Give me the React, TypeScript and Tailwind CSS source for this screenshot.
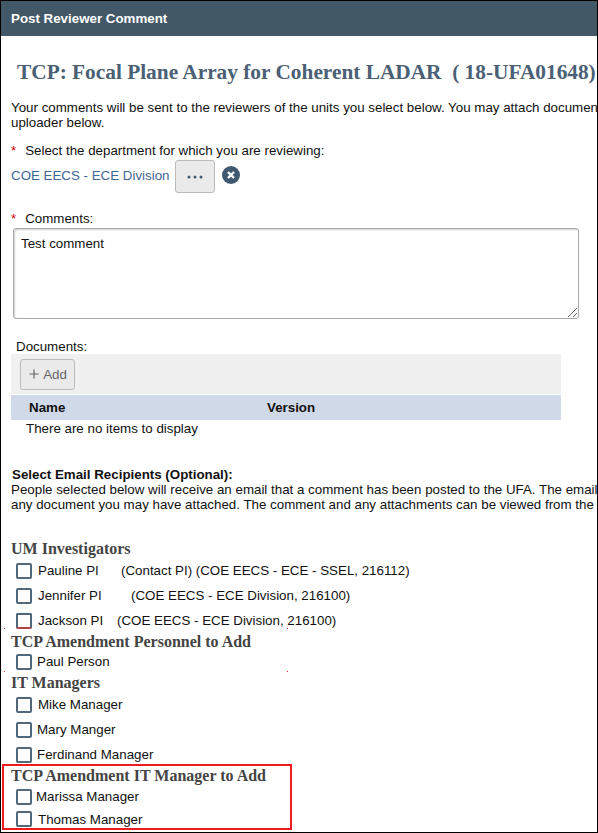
import { Plus } from "lucide-react";

type Person = {
  name: string;
  detail?: string;
  labelClass: string;
  rowClass: string;
  boxClass?: string;
};

const investigators: Person[] = [
  { name: "Pauline PI", detail: "(Contact PI) (COE EECS - ECE - SSEL, 216112)", labelClass: "ml-[6px] w-[83px]", rowClass: "h-[25px]" },
  { name: "Jennifer PI", detail: "(COE EECS - ECE Division, 216100)", labelClass: "ml-[6px] w-[93px]", rowClass: "h-[25px]" },
  { name: "Jackson PI", detail: "(COE EECS - ECE Division, 216100)", labelClass: "ml-[6px] w-[79px]", rowClass: "h-[25px]", boxClass: "border-b-[#b5424a]" }
];

function PersonRow({ name, detail, labelClass, rowClass, boxClass = "" }: Person) {
  return (
    <div className={`flex items-center pl-[15px] ${rowClass}`}>
      <span className={`size-[16px] shrink-0 rounded-[2px] border-2 border-[#51687c] bg-white ${boxClass}`} />
      <span className={`whitespace-nowrap ${labelClass}`}>{name}</span>
      {detail ? <span className="whitespace-nowrap">{detail}</span> : null}
    </div>
  );
}

function GroupTitle({ children, className = "" }: { children: string; className?: string }) {
  return (
    <h4 className={`whitespace-nowrap pl-[10px] font-['Liberation_Serif',serif] text-[16px] font-bold leading-[18px] text-[#444] ${className}`}>
      {children}
    </h4>
  );
}

function Required() {
  return <span className="mr-[9px] text-[#c00]">*</span>;
}

export default function App() {
  return (
    <div className="relative h-[833px] w-[598px] overflow-hidden border border-black bg-white font-['Liberation_Sans',Arial,sans-serif] text-[13.33px] leading-[15px] text-[#111]">
      <header className="flex h-[35px] items-center bg-[#435867] pl-[10px] font-bold text-white">
        Post Reviewer Comment
      </header>

      <h2 className="mt-[24px] whitespace-nowrap pl-[16px] font-['Liberation_Serif',serif] text-[21.33px] font-bold leading-[24px] text-[#4a6074]">
        TCP: Focal Plane Array for Coherent LADAR&nbsp; ( 18-UFA01648)
      </h2>

      <p className="mt-[16px] whitespace-nowrap pl-[10px]">
        Your comments will be sent to the reviewers of the units you select below. You may attach documents
        <br />
        uploader below.
      </p>

      <div className="mt-[13px] pl-[10px]">
        <Required />
        Select the department for which you are reviewing:
      </div>
      <div className="mt-[2px] flex items-center pl-[10px]">
        <span className="mb-[3px] text-[#3f6594]">COE EECS - ECE Division</span>
        <button className="ml-[5px] flex h-[33px] w-[40px] items-center justify-center rounded-[3px] border border-[#bbb] bg-[#eaeaea]">
          <svg width="16" height="4" viewBox="0 0 16 4" fill="#44596b">
            <circle cx="2" cy="2" r="1.5" />
            <circle cx="8" cy="2" r="1.5" />
            <circle cx="14" cy="2" r="1.5" />
          </svg>
        </button>
        <span className="mb-[3px] ml-[7px] flex size-[18px] items-center justify-center rounded-full bg-[#3f5a70]">
          <svg width="10" height="10" viewBox="0 0 10 10">
            <path d="M2 2 8 8M8 2 2 8" stroke="#fff" strokeWidth="2.4" />
          </svg>
        </span>
      </div>

      <div className="mt-[18px] pl-[10px]">
        <Required />
        Comments:
      </div>
      <div className="relative ml-[12px] mt-[2px] h-[91px] w-[566px] rounded-[3px] border border-[#aaa] px-[7px] py-[7px] shadow-[inset_1px_1px_2px_#ccc]">
        Test comment
        <svg className="absolute bottom-px right-px" width="10" height="10" viewBox="0 0 10 10" stroke="#666" strokeWidth="1">
          <path d="M1 10 10 1M6 10 10 6" />
        </svg>
      </div>

      <div className="mt-[20px] pl-[15px]">Documents:</div>
      <div className="ml-[10px] w-[550px]">
        <div className="flex h-[40px] items-center bg-[#f0f0f0] pl-[9px]">
          <button className="flex h-[31px] w-[55px] items-center justify-center gap-[2px] rounded-[3px] border border-[#bbb] bg-[#eaeaea] text-[#666]">
            <Plus size={14} className="-ml-px" />
            Add
          </button>
        </div>
        <div className="mt-px flex h-[25px] items-center bg-[#d0d9e8] pl-[18px] font-bold">
          <span className="w-[238px]">Name</span>
          <span>Version</span>
        </div>
        <div className="pl-[15px] pt-px">There are no items to display</div>
      </div>

      <div className="mt-[31px] whitespace-nowrap pl-[10px]">
        <div className="pl-px font-bold">Select Email Recipients (Optional):</div>
        <p>
          People selected below will receive an email that a comment has been posted to the UFA. The email
          <br />
          any document you may have attached. The comment and any attachments can be viewed from the
        </p>
      </div>

      <GroupTitle className="mt-[28px]">UM Investigators</GroupTitle>
      {investigators.map((p) => (
        <PersonRow key={p.name} {...p} />
      ))}

      <GroupTitle>TCP Amendment Personnel to Add</GroupTitle>
      <PersonRow name="Paul Person" labelClass="ml-[5px]" rowClass="h-[21px]" />

      <GroupTitle className="mt-[2px]">IT Managers</GroupTitle>
      <PersonRow name="Mike Manager" labelClass="ml-[6px]" rowClass="h-[25px]" />
      <PersonRow name="Mary Manger" labelClass="ml-[5px]" rowClass="h-[25px]" />
      <PersonRow name="Ferdinand Manager" labelClass="ml-[5px]" rowClass="h-[25px]" />

      <div className="-mt-[3px] ml-px h-[66px] w-[290px] border-2 border-[#f01c24]">
        <GroupTitle className="-ml-[3px] mt-px">TCP Amendment IT Manager to Add</GroupTitle>
        <PersonRow name="Marissa Manager" labelClass="ml-[4px]" rowClass="-ml-[3px] h-[23px]" />
        <PersonRow name="Thomas Manager" labelClass="ml-[6px]" rowClass="-ml-[3px] h-[22px]" />
      </div>

      {/* leftover specks of an erased annotation box */}
      <span className="absolute left-[3px] top-[627px] size-px bg-[#f01c24]" />
      <span className="absolute left-[286px] top-[627px] size-px bg-[#f01c24]" />
      <span className="absolute left-[3px] top-[670px] size-px bg-[#f01c24]" />
      <span className="absolute left-[286px] top-[670px] size-px bg-[#f01c24]" />
    </div>
  );
}
